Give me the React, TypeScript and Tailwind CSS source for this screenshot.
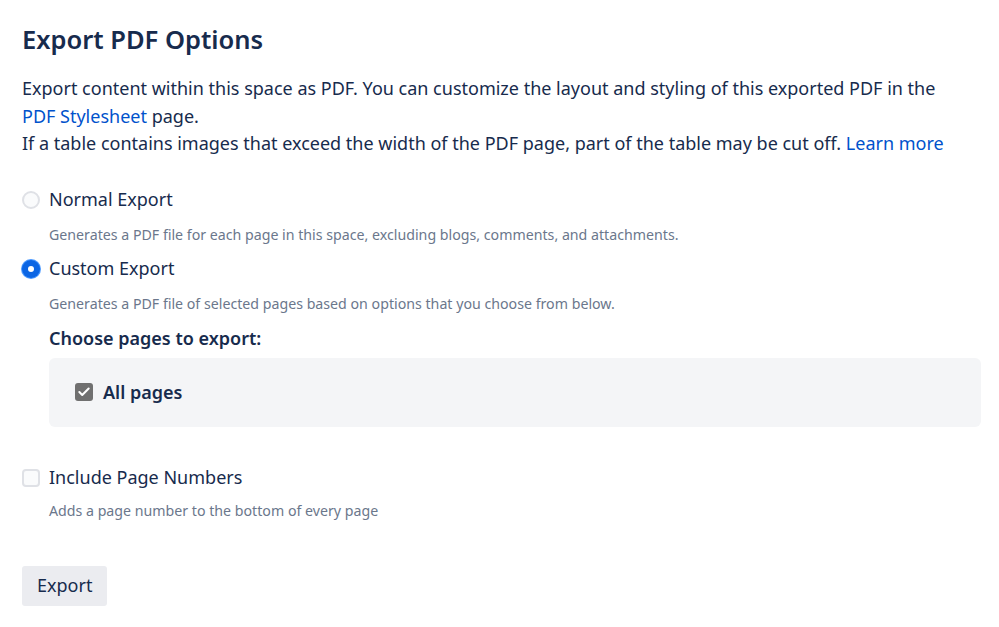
import { Check } from "lucide-react";

const font = { fontFamily: '"Noto Sans", "Open Sans", sans-serif' };

function Radio({ checked }: { checked?: boolean }) {
  return checked ? (
    <span className="flex h-[18px] w-[18px] shrink-0 items-center justify-center rounded-full bg-[#0c66e4] shadow-[0_0_0_1px_#4c9aff]">
      <span className="h-[6px] w-[6px] rounded-full bg-white" />
    </span>
  ) : (
    <span className="h-[18px] w-[18px] shrink-0 rounded-full border-2 border-[#dfe1e6] bg-[#fafbfc]" />
  );
}

function Option({
  label,
  desc,
  checked,
}: {
  label: string;
  desc: string;
  checked?: boolean;
}) {
  return (
    <div>
      <label className="flex h-[28px] items-center gap-[9px]">
        <Radio checked={checked} />
        <span className="text-[18px] text-[#172b4d]">{label}</span>
      </label>
      <p className="mt-[11px] pl-[27px] text-[14.2px] leading-[20px] text-[#6b778c]">{desc}</p>
    </div>
  );
}

export default function App() {
  return (
    <div className="min-h-screen bg-white px-[22px] pt-[22px]" style={font}>
      <h1 className="text-[25.5px] font-semibold leading-[34px] text-[#172b4d]">Export PDF Options</h1>

      <div className="mt-[19px] max-w-[930px] text-[18px] leading-[27.5px] text-[#172b4d]">
        <p>
          Export content within this space as PDF. You can customize the layout and styling of this exported PDF in the{" "}
          <a className="text-[#0052cc]">PDF Stylesheet</a> page.
        </p>
        <p>
          If a table contains images that exceed the width of the PDF page, part of the table may be cut off.{" "}
          <a className="text-[#0052cc]">Learn more</a>
        </p>
      </div>

      <div className="mt-[28px] flex flex-col gap-[10px]">
        <Option
          label="Normal Export"
          desc="Generates a PDF file for each page in this space, excluding blogs, comments, and attachments."
        />
        <Option
          checked
          label="Custom Export"
          desc="Generates a PDF file of selected pages based on options that you choose from below."
        />
      </div>

      <div className="pl-[27px]">
        <h2 className="mt-[10px] text-[18px] font-semibold leading-[28px] text-[#172b4d]">Choose pages to export:</h2>
        <div className="mt-[6px] mr-[-4px] flex h-[69px] items-center gap-[10px] rounded-[6px] bg-[#f4f5f7] px-[26px]">
          <span className="flex h-[18px] w-[18px] items-center justify-center rounded-[3px] bg-[#707070]">
            <Check className="h-[14px] w-[14px] text-white" strokeWidth={3.5} />
          </span>
          <span className="text-[18px] font-semibold text-[#172b4d]">All pages</span>
        </div>
      </div>

      <div className="mt-[37px]">
        <label className="flex h-[28px] items-center gap-[9px]">
          <span className="h-[18px] w-[18px] shrink-0 rounded-[4px] border-2 border-[#dfe1e6] bg-[#fafbfc]" />
          <span className="text-[18px] text-[#172b4d]">Include Page Numbers</span>
        </label>
        <p className="mt-[9px] pl-[27px] text-[14.2px] leading-[20px] text-[#6b778c]">
          Adds a page number to the bottom of every page
        </p>
      </div>

      <button className="mt-[45px] h-[40px] rounded-[3px] bg-[#ebecf0] px-[15px] text-[18px] text-[#172b4d]">
        Export
      </button>
    </div>
  );
}
